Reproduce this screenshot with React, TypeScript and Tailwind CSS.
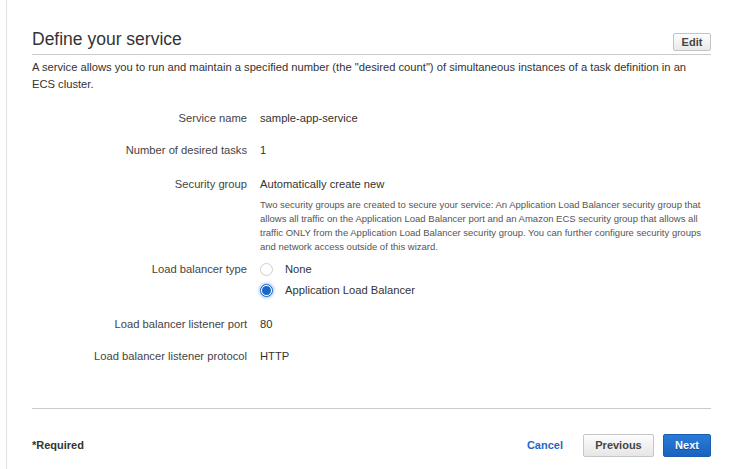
import { useState } from "react";

const rows: { label: string; value: string }[] = [
  { label: "Service name", value: "sample-app-service" },
  { label: "Number of desired tasks", value: "1" },
];

function Radio({ checked }: { checked: boolean }) {
  if (checked) {
    return (
      <span className="w-[13px] h-[13px] rounded-full border border-[#1a63c6] bg-white flex items-center justify-center shadow-[0_0_3px_1px_rgba(60,130,220,0.45)]">
        <span className="w-[9px] h-[9px] rounded-full bg-[#1766c7]" />
      </span>
    );
  }
  return <span className="w-[13px] h-[13px] rounded-full border border-[#cfcfcf] bg-white" />;
}

export default function App() {
  const [lbType, setLbType] = useState("alb");

  return (
    <div className="w-[754px] h-[469px] bg-white overflow-hidden font-['Liberation_Sans',Arial,sans-serif] text-[#444]">
      <div className="ml-[6px] h-full border-l border-[#e2e2e2] pl-[25px] pr-[43px] pt-[28px]">
        {/* Header */}
        <div className="flex items-end justify-between border-b border-[#cbcbcb] pb-[3px]">
          <h2 className="text-[17.5px] leading-[22px] text-[#333] pb-[1px]">Define your service</h2>
          <button className="h-[18px] w-[38px] rounded-[2px] border border-[#c4c4c4] bg-gradient-to-b from-[#fdfdfd] to-[#e9e9e9] text-[11px] font-bold text-[#444] leading-none">
            Edit
          </button>
        </div>
        <p className="text-[11.2px] leading-[17px] pt-[4px] pr-[20px] text-[#333]">
          A service allows you to run and maintain a specified number (the "desired count") of simultaneous instances of a task definition in an ECS cluster.
        </p>

        {/* Details */}
        <div className="mt-[17px] text-[11.2px] leading-[16px]">
          {rows.map((r, i) => (
            <div key={r.label} className={`flex ${i > 0 ? "mt-[16px]" : ""}`}>
              <div className="w-[215px] text-right text-[#444]">{r.label}</div>
              <div className="pl-[13px] text-[#333]">{r.value}</div>
            </div>
          ))}
          <div className="flex mt-[18px]">
            <div className="w-[215px] text-right">Security group</div>
            <div className="pl-[13px] flex-1">
              <div className="text-[#333]">Automatically create new</div>
              <p className="mt-[6px] text-[9.5px] leading-[14px] text-[#555] pr-[4px]">
                Two security groups are created to secure your service: An Application Load Balancer security group that allows all traffic on the Application Load Balancer port and an Amazon ECS security group that allows all traffic ONLY from the Application Load Balancer security group. You can further configure security groups and network access outside of this wizard.
              </p>
            </div>
          </div>
          <div className="flex mt-[7px]">
            <div className="w-[215px] text-right">Load balancer type</div>
            <div className="pl-[13px] flex flex-col gap-[5px]">
              {[
                { id: "none", label: "None" },
                { id: "alb", label: "Application Load Balancer" },
              ].map((o) => (
                <label key={o.id} className="flex items-center h-[16px] cursor-pointer" onClick={() => setLbType(o.id)}>
                  <Radio checked={lbType === o.id} />
                  <span className="ml-[12px] text-[#333]">{o.label}</span>
                </label>
              ))}
            </div>
          </div>
          <div className="flex mt-[18px]">
            <div className="w-[215px] text-right">Load balancer listener port</div>
            <div className="pl-[13px] text-[#333]">80</div>
          </div>
          <div className="flex mt-[16px]">
            <div className="w-[215px] text-right">Load balancer listener protocol</div>
            <div className="pl-[13px] text-[#333]">HTTP</div>
          </div>
        </div>

        {/* Footer */}
        <div className="mt-[44px] border-t border-[#cbcbcb] pt-[25px] flex items-center justify-between">
          <span className="text-[11px] font-bold text-[#333]">*Required</span>
          <div className="flex items-center">
            <button className="text-[11px] font-bold text-[#1f67c2] mr-[20px]">Cancel</button>
            <button className="h-[23px] w-[71px] rounded-[2px] border border-[#c6c6c6] bg-gradient-to-b from-[#fdfdfd] to-[#e6e6e6] text-[11px] font-bold text-[#444]">
              Previous
            </button>
            <button className="ml-[9px] h-[23px] w-[48px] rounded-[2px] border border-[#1a5cb0] bg-gradient-to-b from-[#2a7bd6] to-[#1863bf] text-[11px] font-bold text-white [text-shadow:0_1px_0_rgba(0,0,0,0.35)]">
              Next
            </button>
          </div>
        </div>
      </div>
    </div>
  );
}
